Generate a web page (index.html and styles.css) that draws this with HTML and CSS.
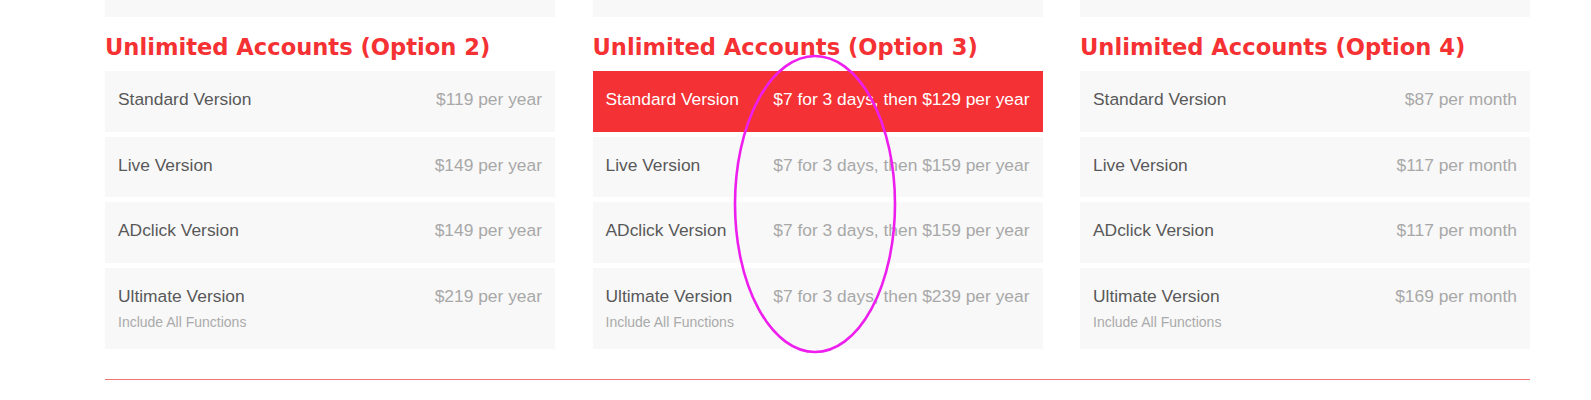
FILE: index.html
```html
<!DOCTYPE html>
<html>
<head>
  <meta charset="UTF-8">
  <title>Pricing</title>
  <link rel="stylesheet" href="styles.css">
</head>
<body>
  <div class="wrap">
    <div class="grid">
      <div class="col">
        <div class="stub"></div>
        <h3>Unlimited Accounts (Option 2)</h3>
        <div class="item"><span class="name">Standard Version</span><span class="price">$119 per year</span></div>
        <div class="item"><span class="name">Live Version</span><span class="price">$149 per year</span></div>
        <div class="item"><span class="name">ADclick Version</span><span class="price">$149 per year</span></div>
        <div class="item tall">
          <div><span class="name">Ultimate Version</span><div class="sub">Include All Functions</div></div>
          <span class="price">$219 per year</span>
        </div>
      </div>

      <div class="col">
        <div class="stub"></div>
        <h3>Unlimited Accounts (Option 3)</h3>
        <div class="item active"><span class="name">Standard Version</span><span class="price">$7 for 3 days, then $129 per year</span></div>
        <div class="item"><span class="name">Live Version</span><span class="price">$7 for 3 days, then $159 per year</span></div>
        <div class="item"><span class="name">ADclick Version</span><span class="price">$7 for 3 days, then $159 per year</span></div>
        <div class="item tall">
          <div><span class="name">Ultimate Version</span><div class="sub">Include All Functions</div></div>
          <span class="price">$7 for 3 days, then $239 per year</span>
        </div>
      </div>

      <div class="col">
        <div class="stub"></div>
        <h3>Unlimited Accounts (Option 4)</h3>
        <div class="item"><span class="name">Standard Version</span><span class="price">$87 per month</span></div>
        <div class="item"><span class="name">Live Version</span><span class="price">$117 per month</span></div>
        <div class="item"><span class="name">ADclick Version</span><span class="price">$117 per month</span></div>
        <div class="item tall">
          <div><span class="name">Ultimate Version</span><div class="sub">Include All Functions</div></div>
          <span class="price">$169 per month</span>
        </div>
      </div>
    </div>
    <div class="divider"></div>
  </div>

  <!-- marker drawn over the screenshot -->
  <svg class="mark" width="170" height="302" viewBox="0 0 170 302">
    <ellipse cx="85" cy="151" rx="80" ry="148" fill="none" stroke="#ee1fee" stroke-width="2.6"/>
  </svg>
</body>
</html>
```

FILE: styles.css
```css
body {
  margin: 0;
  background: #fff;
  font-family: "Liberation Sans", Arial, sans-serif;
  position: relative;
}
.wrap {
  width: 1425px;
  margin-left: 105px;
}
.grid {
  display: grid;
  grid-template-columns: repeat(3, 450px);
  column-gap: 37.5px;
}
.stub {
  height: 17px;
  background: #f8f8f8;
}
h3 {
  font-family: "DejaVu Sans", Verdana, sans-serif;
  font-weight: bold;
  font-size: 22.6px;
  color: #f53133;
  margin: 16.5px 0 11.5px;
  line-height: 26px;
  white-space: nowrap;
}
.item {
  display: flex;
  justify-content: space-between;
  align-items: flex-start;
  background: #f8f8f8;
  padding: 18px 13px 22px;
  line-height: 20.7px;
  font-size: 17.4px;
  margin-bottom: 5px;
}
.item.tall {
  padding-bottom: 17px;
}
.name {
  color: #585858;
}
.price {
  color: #a8a8a8;
}
.sub {
  font-size: 14px;
  line-height: 20px;
  margin-top: 5px;
  color: #aaa;
}
.item.active {
  background: #f43134;
}
.item.active .name,
.item.active .price {
  color: #fff;
}
.divider {
  height: 1px;
  background: #ec7676;
  margin-top: 25px;
}
.mark {
  position: absolute;
  left: 730px;
  top: 53px;
}
```
